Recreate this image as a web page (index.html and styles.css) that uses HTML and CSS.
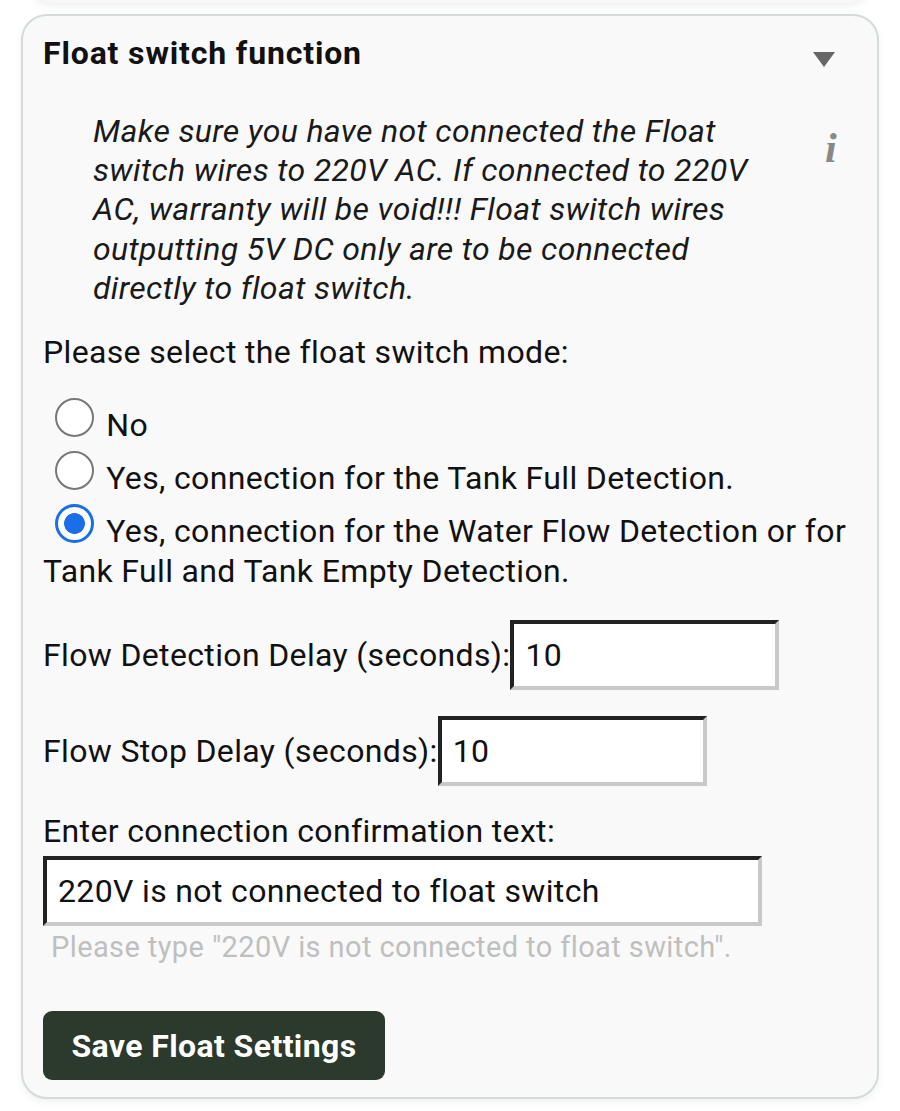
FILE: index.html
```html
<!DOCTYPE html>
<html>
<head>
<meta charset="utf-8">
<link rel="stylesheet" href="styles.css">
</head>
<body>
<div class="page">
  <div class="prev-card"></div>
  <section class="card">
    <div class="card-head">
      <h2 class="title">Float switch function</h2>
      <svg class="caret" width="22" height="15" viewBox="0 0 22 15"><polygon points="0,0 22,0 11,15" fill="#666"/></svg>
    </div>
    <div class="notice">
      <p class="notice-text">Make sure you have not connected the Float switch wires to 220V AC. If connected to 220V AC, warranty will be void!!! Float switch wires outputting 5V DC only are to be connected directly to float switch.</p>
      <span class="info">i</span>
    </div>
    <p class="label">Please select the float switch mode:</p>
    <div class="options">
      <div class="option"><input type="radio" name="mode" class="radio"> No</div>
      <div class="option"><input type="radio" name="mode" class="radio"> Yes, connection for the Tank Full Detection.</div>
      <div class="option"><input type="radio" name="mode" class="radio" checked> Yes, connection for the Water Flow Detection or for Tank Full and Tank Empty Detection.</div>
    </div>
    <div class="field-row first"><span class="field-label">Flow Detection Delay (seconds):</span><input class="field" type="text" value="10"></div>
    <div class="field-row"><span class="field-label">Flow Stop Delay (seconds):</span><input class="field" type="text" value="10"></div>
    <p class="label confirm">Enter connection confirmation text:</p>
    <input class="field wide" type="text" value="220V is not connected to float switch">
    <p class="hint">Please type "220V is not connected to float switch".</p>
    <button class="save">Save Float Settings</button>
  </section>
</div>
</body>
</html>
```
FILE: styles.css
```css
html, body {
  margin: 0;
  padding: 0;
  background: #ffffff;
}
body {
  font-family: Roboto, "Liberation Sans", sans-serif;
  color: #111;
}
.page {
  padding: 0 21px 20px;
}
.prev-card {
  height: 30px;
  margin: -27px 8px 0;
  border-radius: 0 0 24px 24px;
  background: #f7f8f8;
  box-shadow: 0 2px 10px rgba(0,0,0,0.08);
}
.card {
  margin-top: 11px;
  background: #f9f9f9;
  border: 2px solid #d3dcdb;
  border-radius: 26px;
  padding: 17px 20px 17px 20px;
  box-shadow: 0 4px 8px rgba(0,0,0,0.05);
}
.card-head {
  display: flex;
  justify-content: space-between;
  align-items: center;
  height: 40px;
}
.title {
  margin: 0;
  font-size: 32px;
  letter-spacing: 0.85px;
  line-height: 40px;
  font-weight: 700;
  color: #111;
}
.caret {
  margin-right: 22px;
  margin-top: 12px;
}
.notice {
  display: flex;
  align-items: flex-start;
  margin-top: 39px;
}
.notice-text {
  margin: 0 0 0 50px;
  width: 672px;
  font-style: italic;
  font-size: 32px;
  letter-spacing: 0.35px;
  line-height: 39.2px;
  color: #1a1a1a;
}
.info {
  font-family: "Liberation Serif", "DejaVu Serif", serif;
  font-style: italic;
  font-weight: 700;
  font-size: 42px;
  line-height: 40px;
  color: #888;
  margin-left: 60px;
  margin-top: 16px;
}
.label {
  margin: 24px 0 0 0;
  font-size: 32px;
  letter-spacing: 0.35px;
  line-height: 40px;
  color: #111;
}
.options {
  margin-top: 20px;
}
.option {
  font-size: 32px;
  letter-spacing: 0.35px;
  line-height: 40px;
  color: #111;
}
.radio {
  appearance: none;
  -webkit-appearance: none;
  width: 39px;
  height: 39px;
  margin: 6px 4px 0 12px;
  border: 2.5px solid #777;
  border-radius: 50%;
  background: #fff;
  box-sizing: border-box;
  vertical-align: -1px;
}
.radio:checked {
  border: 3px solid #1a6fe8;
  background: radial-gradient(circle, #1a6fe8 0 10px, #fff 10.8px);
}
.field-row {
  display: flex;
  align-items: center;
  margin-top: 26px;
  font-size: 32px;
  letter-spacing: 0.35px;
}
.field-row.first {
  margin-top: 29px;
}
.field-label {
  line-height: 40px;
}
.field {
  font-family: Roboto, "Liberation Sans", sans-serif;
  font-size: 32px;
  letter-spacing: 0.35px;
  color: #111;
  width: 269px;
  height: 70px;
  box-sizing: border-box;
  padding: 0 0 0 11px;
  margin: 0;
  background: #fff;
  border-style: solid;
  border-width: 4.5px;
  border-color: #222 #c9c9c9 #c9c9c9 #222;
  outline: none;
}
.field.wide {
  display: block;
  width: 719px;
}
.confirm {
  margin-top: 25px;
  margin-bottom: 5px;
}
.hint {
  margin: 1px 0 0 8px;
  font-size: 29px;
  letter-spacing: 0.4px;
  line-height: 40px;
  color: #bfbfbf;
}
.save {
  display: block;
  margin-top: 44px;
  font-family: Roboto, "Liberation Sans", sans-serif;
  font-weight: 700;
  font-size: 32px;
  letter-spacing: 0.4px;
  color: #fff;
  background: #2c392d;
  border: none;
  border-radius: 9px;
  width: 342px;
  height: 69px;
  padding: 0;
}
```
